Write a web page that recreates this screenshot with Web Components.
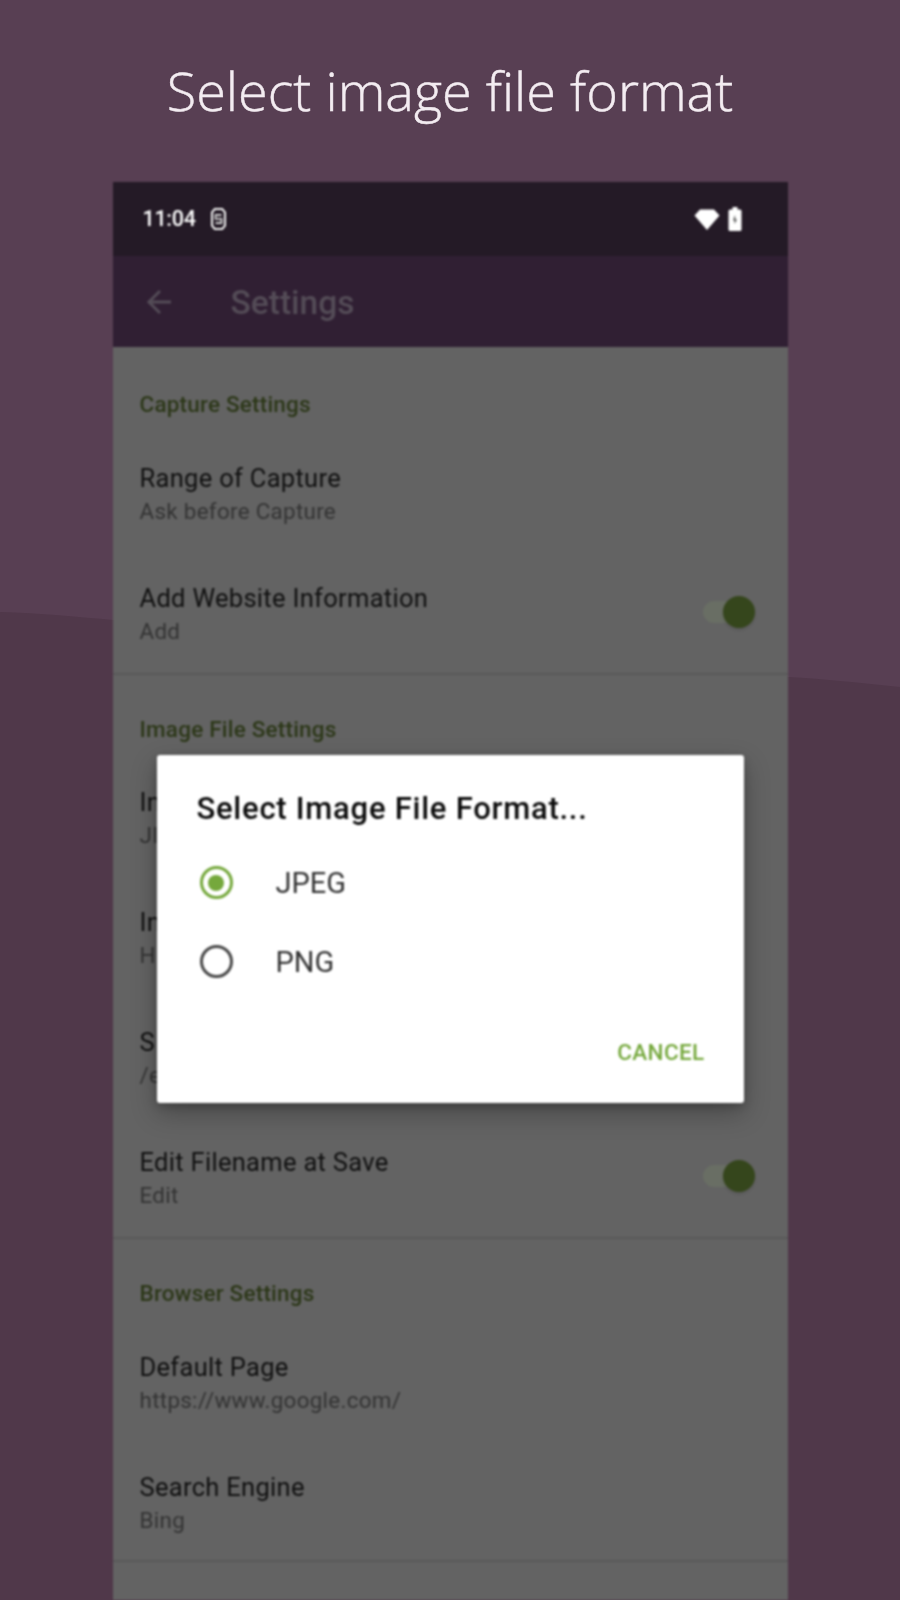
<!DOCTYPE html>
<html lang="en"><head><meta charset="utf-8"><title>Select image file format</title>
<style>html,body{margin:0;padding:0;background:#583f53}</style></head>
<body>
<store-page heading="Select image file format">
  <phone-frame>
    <status-bar slot="status" time="11:04"></status-bar>
    <app-bar slot="bar" label="Settings"></app-bar>
    <settings-section heading="Capture Settings" first>
      <settings-row label="Range of Capture" value="Ask before Capture"></settings-row>
      <settings-row label="Add Website Information" value="Add" toggle></settings-row>
    </settings-section>
    <settings-section heading="Image File Settings" gap="82">
      <settings-row label="In" value="JI"></settings-row>
      <settings-row label="In" value="H"></settings-row>
      <settings-row label="S" value="/e"></settings-row>
      <settings-row label="Edit Filename at Save" value="Edit" toggle></settings-row>
    </settings-section>
    <settings-section heading="Browser Settings" gap="83">
      <settings-row label="Default Page" value="https://www.google.com/"></settings-row>
      <settings-row label="Search Engine" value="Bing" style="height:118px;padding-top:6px"></settings-row>
    </settings-section>
    <format-dialog slot="overlay" heading="Select Image File Format...">
      <radio-option checked>JPEG</radio-option>
      <radio-option>PNG</radio-option>
    </format-dialog>
  </phone-frame>
</store-page>
<script>
function def(name, css, html){
  customElements.define(name, class extends HTMLElement{
    connectedCallback(){
      if(this.shadowRoot) return;
      const r=this.attachShadow({mode:'open'});
      const a=n=>this.getAttribute(n)||'';
      r.innerHTML='<style>'+css+'</style>'+html(a,this);
    }
  });
}
def('store-page',`
  :host{display:block;position:relative;width:900px;height:1600px;overflow:hidden;background:#583f53;font-family:Roboto,sans-serif}
  .wave{position:absolute;inset:0;width:900px;height:1600px}
  h1{position:relative;margin:0;height:182px;box-sizing:border-box;padding-top:57px;text-align:center;font:300 54px/66px "Open Sans",sans-serif;letter-spacing:0;color:#f3ecf1;-webkit-text-stroke:.45px #f3ecf1;filter:blur(.7px)}
  .wrap{position:relative;display:flex;justify-content:center}
`,a=>`<svg class="wave" viewBox="0 0 900 1600" aria-hidden="true"><path d="M0 1600V612C40 613 80 617 113 620L788 677C825 679 860 683 900 687V1600Z" fill="#50384a"/></svg>
<h1>${a('heading')}</h1><div class="wrap"><slot></slot></div>`);
def('phone-frame',`
  :host{display:block;position:relative;width:675px;height:1418px;overflow:hidden;background:#636363;filter:blur(.9px)}
  .list{display:flex;flex-direction:column}
`,()=>`<slot name="status"></slot><slot name="bar"></slot><div class="list"><slot></slot></div><slot name="overlay"></slot>`);
def('status-bar',`
  :host{display:flex;align-items:center;height:74px;box-sizing:border-box;padding:0 45px 0 30px;background:#241a26;color:#fff}
  span{font:500 21.500px/24px Roboto,sans-serif;letter-spacing:-.3px}
  .s{margin-left:14px}
  .r{margin-left:auto;display:flex;align-items:center;gap:6px}
  svg{display:block}
`,a=>`<span>${a('time')}</span>
<svg class="s" width="17" height="24" viewBox="0 0 17 24" aria-hidden="true"><path d="M4.800 2h7.400l2.800 3.300v13.400L12.200 22H4.800L2 18.700V5.300z" fill="#241a26" stroke="#f2f2f2" stroke-width="2"/><path d="M11.500 8H5.500v3.900h6V16H5.500" fill="none" stroke="#cfcfcf" stroke-width="1.800"/></svg>
<div class="r"><svg width="28" height="24" viewBox="0 0 28 24" aria-hidden="true"><path d="M14 23 1.500 8.500 7 2.500h14l5.500 6z" fill="#fff"/></svg>
<svg width="16" height="26" viewBox="0 0 16 26" aria-hidden="true"><path d="M5.500 1h5v2.500h2.500a1.500 1.500 0 0 1 1.500 1.500V23.500a1.500 1.500 0 0 1-1.500 1.500H3a1.500 1.500 0 0 1-1.500-1.500V5A1.500 1.500 0 0 1 3 3.500h2.500z" fill="#fff"/><path d="M8 9 6 14.500H7.500V18L10 13.500H8.500z" fill="#555"/></svg></div>`);
def('app-bar',`
  :host{display:flex;align-items:center;height:91px;box-sizing:border-box;padding:0 0 0 33px;background:#301f33;color:#544c57}
  svg{display:block;width:26px;height:26px}
  span{margin-left:59px;font:500 33.500px/40px Roboto,sans-serif;margin-top:2px}
`,a=>`<svg viewBox="0 0 26 26" aria-hidden="true"><path d="M25 13H3M14 2 2.800 13 14 24" fill="none" stroke="currentColor" stroke-width="2.800"/></svg><span>${a('label')}</span>`);
def('settings-section',`
  :host{display:block;border-bottom:2px solid #585858}
  h2{margin:0;box-sizing:border-box;padding:40px 0 0 27px;font:500 22.500px/28px Roboto,sans-serif;letter-spacing:.2px;color:#2c3718}
  :host([first]) h2{padding-top:43px}
`,(a)=>`<h2 style="height:${a('gap')||86}px">${a('heading')}</h2><slot></slot>`);
def('settings-row',`
  :host{display:flex;align-items:center;height:120px;box-sizing:border-box;padding:4px 33px 0 27px}
  .t{flex:1;min-width:0;white-space:nowrap}
  .l{font:400 25.500px/33px Roboto,sans-serif;color:#101010;letter-spacing:.3px}
  .v{font:400 22.400px/33px Roboto,sans-serif;color:#333;letter-spacing:.3px}
  .sw{position:relative;width:52px;height:32px;flex:none;margin:-6px 0 0 auto}
  .sw i{position:absolute;left:0;right:8px;top:5px;height:22px;border-radius:11px;background:#696e64}
  .sw b{position:absolute;right:0;top:0;width:32px;height:32px;border-radius:50%;background:#35461c;box-shadow:0 2px 3px rgba(0,0,0,.12)}
`,(a,el)=>`<div class="t"><div class="l">${a('label')}</div><div class="v">${a('value')}</div></div>${el.hasAttribute('toggle')?'<div class="sw"><i></i><b></b></div>':''}`);
def('format-dialog',`
  :host{position:absolute;left:44px;top:573px;width:587px;height:348px;box-sizing:border-box;background:#fff;border-radius:3px;box-shadow:0 10px 26px rgba(0,0,0,.28),0 3px 8px rgba(0,0,0,.18);display:flex;flex-direction:column;padding:34px 39px 36px 40px}
  h3{margin:0 0 14px;font:500 31px/40px Roboto,sans-serif;color:#0c0c0c;letter-spacing:.75px;white-space:nowrap}
  .o{display:flex;flex-direction:column;flex:1}
  button{all:unset;align-self:flex-end;font:500 22.500px/30px Roboto,sans-serif;letter-spacing:.35px;color:#75a83c}
`,a=>`<h3>${a('heading')}</h3><div class="o"><slot></slot></div><button>CANCEL</button>`);
def('radio-option',`
  :host{display:flex;align-items:center;height:79px;font:400 29px/34px Roboto,sans-serif;color:#333}
  .c{width:33px;height:33px;box-sizing:border-box;border-radius:50%;border:3px solid #484848;margin:0 43px 0 3px;display:flex;align-items:center;justify-content:center;flex:none}
  :host([checked]) .c{border-color:#75a83c}
  :host([checked]) .c::after{content:"";width:16px;height:16px;border-radius:50%;background:#75a83c}
`,()=>`<div class="c"></div><slot></slot>`);
</script>
</body></html>
